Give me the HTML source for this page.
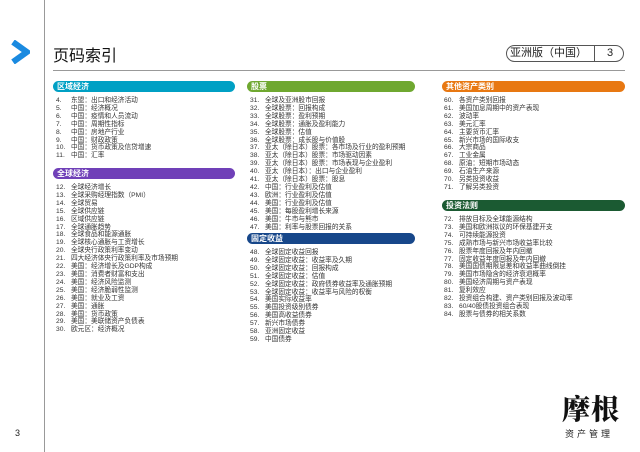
<!DOCTYPE html><html><head><meta charset="utf-8"><style>
body{margin:0;width:640px;height:452px;background:#fff;position:relative;overflow:hidden;font-family:"Liberation Sans","Noto Sans CJK SC",sans-serif;color:#222}
.vl{position:absolute;left:44px;top:0;width:1px;height:452px;background:#999}
.hd{position:absolute;height:11px;border-radius:6px;color:#fff;font-size:8px;line-height:11px;padding-left:4px;box-sizing:border-box;font-weight:bold}
.l{position:absolute;font-size:6.7px;line-height:7.9px;white-space:nowrap;color:#333}
.l span{display:inline-block;width:15px}
</style></head><body>
<div class="vl"></div>
<svg style="position:absolute;left:10px;top:40px" width="20" height="24"><path d="M3 2 L17 12 L3 22" fill="none" stroke="#1a8ae0" stroke-width="6" stroke-linejoin="miter"/></svg>
<div style="position:absolute;left:53px;top:42px;font-size:16px;color:#111">页码索引</div>
<div style="position:absolute;left:506px;top:45px;width:118px;height:17px;border:1px solid #555;border-radius:9px;box-sizing:border-box;font-size:11px;line-height:15px;color:#222"><span style="position:absolute;left:3px">亚洲版（中国）</span><span style="position:absolute;left:87px;top:0;width:1px;height:15px;background:#555"></span><span style="position:absolute;left:100px">3</span></div>
<div style="position:absolute;left:53px;top:70px;width:572px;height:1px;background:#999"></div>

<div class="hd" style="left:53px;top:81px;width:182px;background:#00a0c4">区域经济</div>
<div class="l" style="left:56px;top:97px"><span>4.</span>东盟：出口和经济活动<br><span>5.</span>中国：经济概况<br><span>6.</span>中国：疫情和人员流动<br><span>7.</span>中国：周期性指标<br><span>8.</span>中国：房地产行业<br><span>9.</span>中国：财政政策<br><span>10.</span>中国：货币政策及信贷增速<br><span>11.</span>中国：汇率</div>
<div class="hd" style="left:53px;top:168px;width:182px;background:#7040b8">全球经济</div>
<div class="l" style="left:56px;top:184px"><span>12.</span>全球经济增长<br><span>13.</span>全球采购经理指数（PMI）<br><span>14.</span>全球贸易<br><span>15.</span>全球供应链<br><span>16.</span>区域供应链<br><span>17.</span>全球通胀趋势<br><span>18.</span>全球食品和能源通胀<br><span>19.</span>全球核心通胀与工资增长<br><span>20.</span>全球央行政策利率变动<br><span>21.</span>四大经济体央行政策利率及市场预期<br><span>22.</span>美国：经济增长及GDP构成<br><span>23.</span>美国：消费者财富和支出<br><span>24.</span>美国：经济风险监测<br><span>25.</span>美国：经济脆弱性监测<br><span>26.</span>美国：就业及工资<br><span>27.</span>美国：通胀<br><span>28.</span>美国：货币政策<br><span>29.</span>美国：美联储资产负债表<br><span>30.</span>欧元区：经济概况</div>

<div class="hd" style="left:247px;top:81px;width:168px;background:#6fa830">股票</div>
<div class="l" style="left:250px;top:97px"><span>31.</span>全球及亚洲股市回报<br><span>32.</span>全球股票：回报构成<br><span>33.</span>全球股票：盈利预期<br><span>34.</span>全球股票：通胀及盈利能力<br><span>35.</span>全球股票：估值<br><span>36.</span>全球股票：成长股与价值股<br><span>37.</span>亚太（除日本）股票：各市场及行业的盈利预期<br><span>38.</span>亚太（除日本）股票：市场驱动因素<br><span>39.</span>亚太（除日本）股票：市场表现与企业盈利<br><span>40.</span>亚太（除日本）：出口与企业盈利<br><span>41.</span>亚太（除日本）股票：股息<br><span>42.</span>中国：行业盈利及估值<br><span>43.</span>欧洲：行业盈利及估值<br><span>44.</span>美国：行业盈利及估值<br><span>45.</span>美国：每股盈利增长来源<br><span>46.</span>美国：牛市与熊市<br><span>47.</span>美国：利率与股票回报的关系</div>
<div class="hd" style="left:247px;top:233px;width:168px;background:#17478a">固定收益</div>
<div class="l" style="left:250px;top:249px"><span>48.</span>全球固定收益回报<br><span>49.</span>全球固定收益：收益率及久期<br><span>50.</span>全球固定收益：回报构成<br><span>51.</span>全球固定收益：估值<br><span>52.</span>全球固定收益：政府债券收益率及通胀预期<br><span>53.</span>全球固定收益：收益率与风险的权衡<br><span>54.</span>美国实际收益率<br><span>55.</span>美国投资级别债券<br><span>56.</span>美国高收益债券<br><span>57.</span>新兴市场债券<br><span>58.</span>亚洲固定收益<br><span>59.</span>中国债券</div>

<div class="hd" style="left:442px;top:81px;width:183px;background:#e87812">其他资产类别</div>
<div class="l" style="left:444px;top:97px"><span>60.</span>各资产类别回报<br><span>61.</span>美国加息周期中的资产表现<br><span>62.</span>波动率<br><span>63.</span>美元汇率<br><span>64.</span>主要货币汇率<br><span>65.</span>新兴市场的国际收支<br><span>66.</span>大宗商品<br><span>67.</span>工业金属<br><span>68.</span>原油：短期市场动态<br><span>69.</span>石油生产来源<br><span>70.</span>另类投资收益<br><span>71.</span>了解另类投资</div>
<div class="hd" style="left:442px;top:200px;width:183px;background:#1b5a32">投资法则</div>
<div class="l" style="left:444px;top:216px"><span>72.</span>排放目标及全球能源结构<br><span>73.</span>美国和欧洲拟议的环保基建开支<br><span>74.</span>可持续能源投资<br><span>75.</span>成熟市场与新兴市场收益率比较<br><span>76.</span>股票年度回报及年内回撤<br><span>77.</span>固定收益年度回报及年内回撤<br><span>78.</span>美国国债期限息差和收益率曲线倒挂<br><span>79.</span>美国市场隐含的经济衰退概率<br><span>80.</span>美国经济周期与资产表现<br><span>81.</span>复利效应<br><span>82.</span>投资组合构建、资产类别回报及波动率<br><span>83.</span>60/40股债投资组合表现<br><span>84.</span>股票与债券的相关系数</div>

<div style="position:absolute;left:15px;top:428px;font-size:9px">3</div>
<div style="position:absolute;left:562px;top:388px;font-size:28px;font-family:'Noto Serif CJK SC',serif;font-weight:900;color:#111;letter-spacing:1px">摩根</div>
<div style="position:absolute;left:565px;top:427px;font-size:9px;letter-spacing:3px;color:#222">资产管理</div>
</body></html>
